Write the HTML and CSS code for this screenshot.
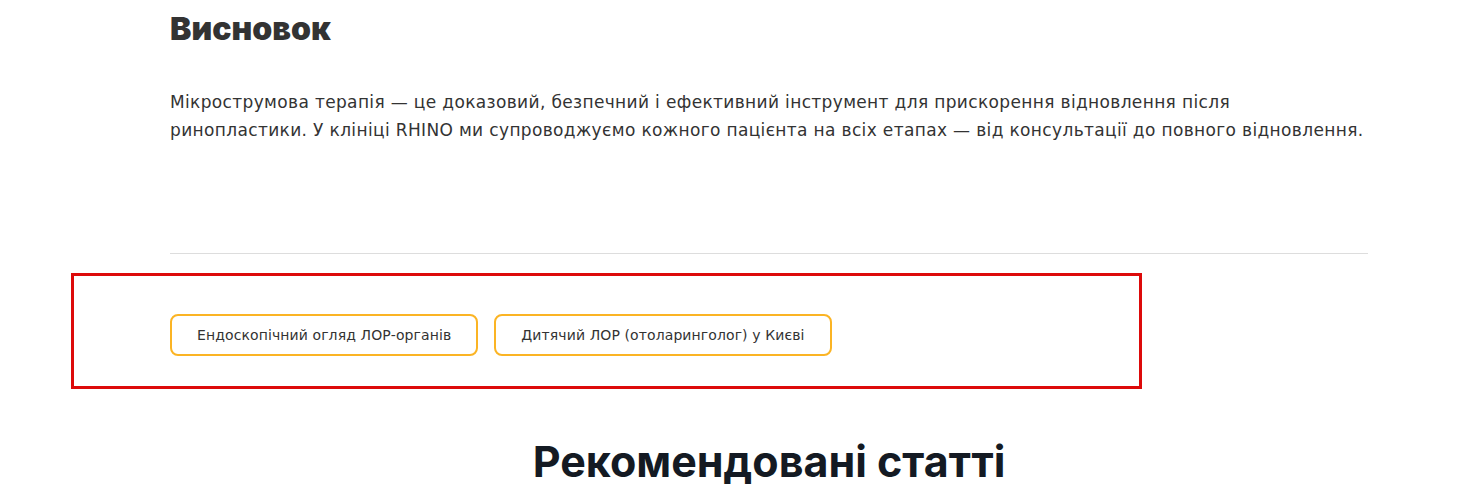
FILE: index.html
```html
<!DOCTYPE html>
<html lang="uk">
<head>
<meta charset="utf-8">
<title>Висновок</title>
<link rel="stylesheet" href="styles.css">
</head>
<body>
<main class="page">
  <section class="article">
    <h2 class="article-title">Висновок</h2>
    <p class="article-text">Мікрострумова терапія — це доказовий, безпечний і ефективний інструмент для прискорення відновлення після ринопластики. У клініці RHINO ми супроводжуємо кожного пацієнта на всіх етапах — від консультації до повного відновлення.</p>
    <hr class="divider">
  </section>
  <section class="tags">
    <a class="tag" href="#">Ендоскопічний огляд ЛОР-органів</a>
    <a class="tag" href="#">Дитячий ЛОР (отоларинголог) у Києві</a>
  </section>
  <section class="recommended">
    <h2 class="recommended-title">Рекомендовані статті</h2>
  </section>
</main>
</body>
</html>
```
FILE: styles.css
```css
html, body {
  margin: 0;
  padding: 0;
  background: #ffffff;
}
body {
  font-family: "DejaVu Sans", "Open Sans", sans-serif;
  color: #333333;
  overflow: hidden;
}
.page {
  display: flex;
  flex-direction: column;
}
.article {
  margin-left: 170px;
  width: 1198px;
  display: flex;
  flex-direction: column;
}
.article-title {
  margin: 10px 0 0;
  font-family: "Inter", sans-serif;
  font-weight: 900;
  font-size: 32px;
  line-height: 38px;
  color: #333333;
}
.article-text {
  margin: 40px 0 0;
  font-size: 17px;
  line-height: 28px;
  letter-spacing: 0.35px;
  color: #333333;
}
.divider {
  margin: 109px 0 0;
  border: 0;
  border-top: 1px solid #dddddd;
  height: 0;
}
.tags {
  margin: 19px 0 0 71px;
  width: 1071px;
  box-sizing: border-box;
  border: 3px solid #dd0a0a;
  padding: 38px 0 30px 96px;
  display: flex;
  gap: 16px;
}
.tag {
  display: flex;
  align-items: center;
  height: 42px;
  box-sizing: border-box;
  padding: 0 25px;
  border: 2px solid #fbb424;
  border-radius: 8px;
  font-size: 14px;
  letter-spacing: 0.1px;
  color: #333333;
  text-decoration: none;
}
.recommended {
  margin-left: 170px;
  width: 1198px;
  display: flex;
  justify-content: center;
}
.recommended-title {
  margin: 46px 0 0;
  font-family: "Inter", sans-serif;
  font-weight: 700;
  font-size: 43px;
  line-height: 52px;
  color: #141a23;
}
```
